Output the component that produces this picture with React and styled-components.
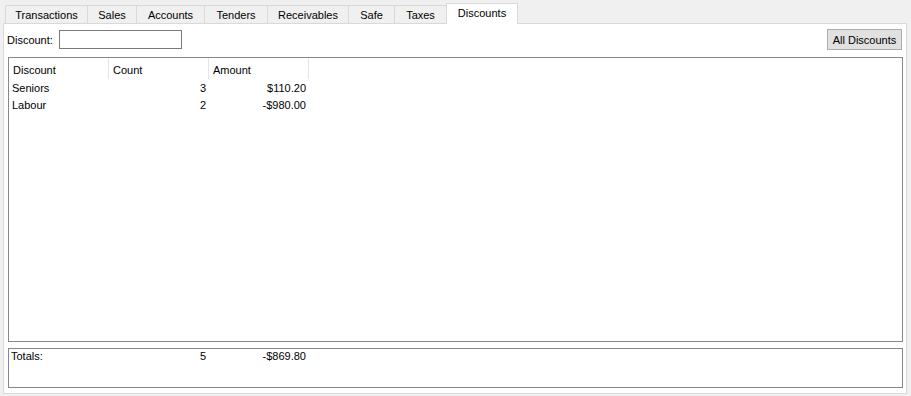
import styled, { createGlobalStyle } from "styled-components";

const GlobalStyle = createGlobalStyle`
  html, body {
    margin: 0;
    padding: 0;
    background: #f0f0f0;
  }
  body {
    font-family: "Liberation Sans", Arial, sans-serif;
    font-size: 11px;
    color: #000;
  }
`;

const tabs = [
  { label: "Transactions", width: 82 },
  { label: "Sales", width: 49 },
  { label: "Accounts", width: 68 },
  { label: "Tenders", width: 63 },
  { label: "Receivables", width: 81 },
  { label: "Safe", width: 46 },
  { label: "Taxes", width: 52 },
  { label: "Discounts", width: 72, active: true }
];

const rows = [
  { name: "Seniors", count: 3, amount: "$110.20" },
  { name: "Labour", count: 2, amount: "-$980.00" }
];

export default function App() {
  return (
    <>
      <GlobalStyle />
      <Window>
        <TabStrip>
          {tabs.map((t) => (
            <Tab key={t.label} $active={t.active} style={{ width: t.width }}>
              {t.label}
            </Tab>
          ))}
        </TabStrip>
        <Panel>
          <Toolbar>
            <Label>Discount:</Label>
            <Input type="text" />
            <Spacer />
            <Button>All Discounts</Button>
          </Toolbar>
          <ListBox>
            <HeaderRow>
              <HeaderCell>Discount</HeaderCell>
              <HeaderCell>Count</HeaderCell>
              <HeaderCell>Amount</HeaderCell>
            </HeaderRow>
            {rows.map((r) => (
              <Row key={r.name}>
                <Cell>{r.name}</Cell>
                <Cell $right>{r.count}</Cell>
                <Cell $right>{r.amount}</Cell>
              </Row>
            ))}
          </ListBox>
          <TotalsBox>
            <TotalsRow>
              <Cell $pad={2}>Totals:</Cell>
              <Cell $right>5</Cell>
              <Cell $right>-$869.80</Cell>
            </TotalsRow>
          </TotalsBox>
        </Panel>
      </Window>
    </>
  );
}

const Window = styled.div`
  padding: 3px 0 0 3px;
  width: 904px;
`;

const TabStrip = styled.div`
  display: flex;
  align-items: flex-end;
  height: 20px;
  padding-left: 2px;
  position: relative;
  z-index: 1;
`;

const Tab = styled.div`
  box-sizing: border-box;
  height: ${(p) => (p.$active ? "21px" : "18px")};
  margin-bottom: ${(p) => (p.$active ? "-1px" : "0")};
  display: flex;
  align-items: center;
  justify-content: center;
  padding-bottom: ${(p) => (p.$active ? "2px" : "0")};
  background: ${(p) => (p.$active ? "#ffffff" : "#f0f0f0")};
  border: 1px solid #d9d9d9;
  border-right: ${(p) => (p.$active ? "1px solid #d9d9d9" : "none")};
  border-bottom: none;
  white-space: nowrap;
`;

const Panel = styled.div`
  box-sizing: border-box;
  height: 371px;
  background: #ffffff;
  border: 1px solid #d9d9d9;
  padding: 5px 3px 5px 4px;
  display: flex;
  flex-direction: column;
`;

const Toolbar = styled.div`
  display: flex;
  align-items: center;
  height: 21px;
  padding: 0 1px 0 0;
  margin-bottom: 7px;
`;

const Label = styled.span`
  margin: 0 6px 0 -1px;
`;

const Input = styled.input`
  box-sizing: border-box;
  width: 123px;
  height: 19px;
  border: 1px solid #7a7a7a;
  padding: 0 3px;
  margin: 0;
  font: inherit;
  outline: none;
`;

const Spacer = styled.div`
  flex: 1;
`;

const Button = styled.button`
  box-sizing: border-box;
  width: 75px;
  height: 21px;
  padding: 0;
  margin: 0;
  background: #e1e1e1;
  border: 1px solid #adadad;
  font: inherit;
  color: #000;
`;

const ListBox = styled.div`
  flex: 1;
  border: 1px solid #828790;
  background: #ffffff;
`;

const HeaderRow = styled.div`
  display: grid;
  grid-template-columns: 100px 100px 100px;
  height: 21px;
`;

const HeaderCell = styled.div`
  display: flex;
  align-items: center;
  padding: 2px 0 0 4px;
  border-right: 1px solid #e5e5e5;
`;

const Row = styled.div`
  display: grid;
  grid-template-columns: 100px 100px 100px;
  height: 17px;
  align-items: center;
`;

const Cell = styled.div`
  padding: ${(p) => (p.$right ? "0 3px 0 0" : `0 0 0 ${p.$pad ?? 3}px`)};
  text-align: ${(p) => (p.$right ? "right" : "left")};
  white-space: nowrap;
`;

const TotalsBox = styled.div`
  box-sizing: border-box;
  height: 40px;
  margin-top: 6px;
  border: 1px solid #828790;
  background: #ffffff;
`;

const TotalsRow = styled.div`
  display: grid;
  grid-template-columns: 100px 100px 100px;
  height: 13px;
  align-items: center;
`;
